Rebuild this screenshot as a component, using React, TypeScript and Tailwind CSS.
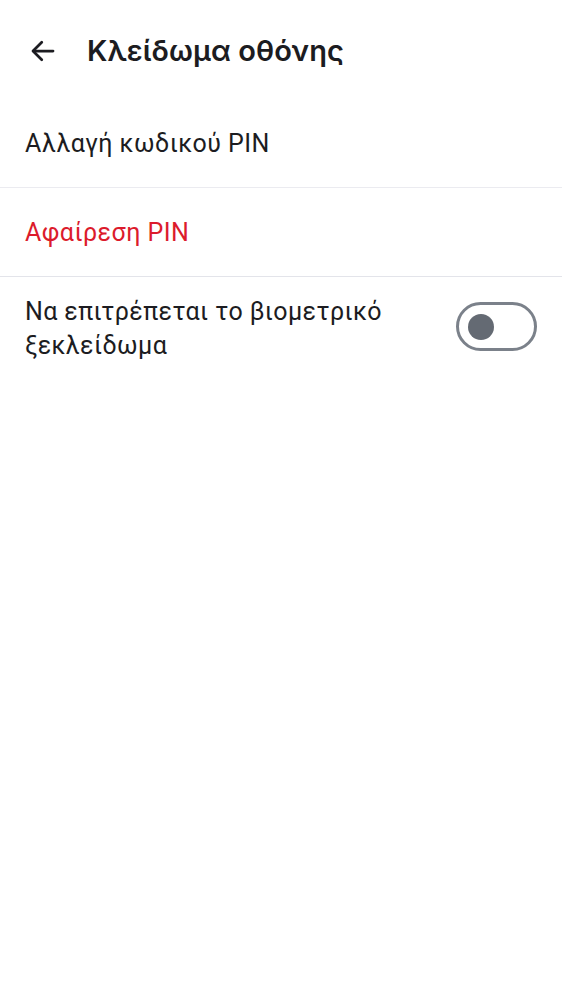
import React from "react";

export default function App() {
  return (
    <div className="min-h-screen bg-white" style={{ fontFamily: "Roboto, 'Noto Sans', sans-serif" }}>
      <div className="flex h-[100px] items-center pl-[28px] pt-[2px]">
        <svg width="30" height="30" viewBox="0 0 24 24" fill="none" stroke="#1c1c21" strokeWidth="2.2" strokeLinecap="round" strokeLinejoin="round">
          <path d="M20 12H4.5" />
          <path d="M11 5l-7 7 7 7" />
        </svg>
        <h1 className="ml-[29px] text-[29px] font-semibold text-[#1c1c21] tracking-[0.1px]" style={{ fontFamily: "Inter, 'Noto Sans', sans-serif" }}>
          Κλείδωμα οθόνης
        </h1>
      </div>
      <div className="flex h-[88px] items-center border-b border-[#ebebf0] pl-[25px] pt-[1px]">
        <span className="text-[25px] text-[#1c1c21] tracking-[0.45px]">Αλλαγή κωδικού PIN</span>
      </div>
      <div className="flex h-[89px] items-center border-b border-[#e3e4ea] pl-[25px] pt-[1px]">
        <span className="text-[25px] text-[#dc1b2c] tracking-[0.45px]">Αφαίρεση PIN</span>
      </div>
      <div className="flex items-start justify-between pl-[25px] pr-[25px] pt-[18px]">
        <span className="w-[410px] text-[25px] leading-[34px] text-[#1c1c21] tracking-[0.4px]">
          Να επιτρέπεται το βιομετρικό ξεκλείδωμα
        </span>
        <div className="mt-[7px] flex h-[49px] w-[81px] items-center rounded-full border-[3px] border-[#7b818a] pl-[9px]">
          <div className="h-[26px] w-[26px] rounded-full bg-[#646a73]" />
        </div>
      </div>
    </div>
  );
}
